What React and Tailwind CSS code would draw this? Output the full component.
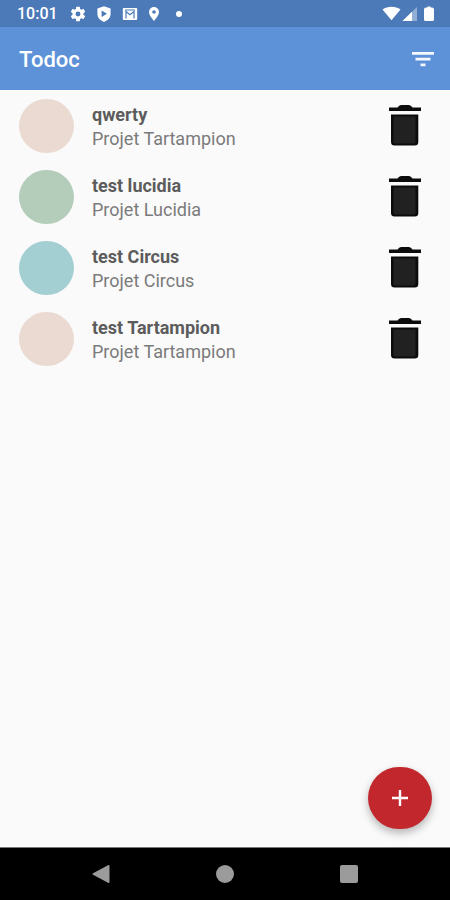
import React from "react";

const tasks = [
  { name: "qwerty", project: "Projet Tartampion", color: "bg-[#eadad1]" },
  { name: "test lucidia", project: "Projet Lucidia", color: "bg-[#b4cdba]" },
  { name: "test Circus", project: "Projet Circus", color: "bg-[#a3ced2]" },
  { name: "test Tartampion", project: "Projet Tartampion", color: "bg-[#eadad1]" },
];

function GearIcon() {
  return (
    <svg viewBox="1.5 1.5 21 21" className="size-4" fill="currentColor" aria-hidden="true">
      <path d="M19.14 12.94c.04-.3.06-.61.06-.94 0-.32-.02-.64-.07-.94l2.03-1.58a.49.49 0 0 0 .12-.61l-1.92-3.32a.488.488 0 0 0-.59-.22l-2.39.96c-.5-.38-1.03-.7-1.62-.94l-.36-2.54a.484.484 0 0 0-.48-.41h-3.84c-.24 0-.43.17-.47.41l-.36 2.54c-.59.24-1.13.57-1.62.94l-2.39-.96c-.22-.08-.47 0-.59.22L2.74 8.87c-.12.21-.08.47.12.61l2.03 1.58c-.05.3-.09.63-.09.94s.02.64.07.94l-2.03 1.58a.49.49 0 0 0-.12.61l1.92 3.32c.12.22.37.29.59.22l2.39-.96c.5.38 1.03.7 1.62.94l.36 2.54c.05.24.24.41.48.41h3.84c.24 0 .44-.17.47-.41l.36-2.54c.59-.24 1.13-.56 1.62-.94l2.39.96c.22.08.47 0 .59-.22l1.92-3.32c.12-.22.07-.47-.12-.61l-2.01-1.58zM12 15.2A3.2 3.2 0 1 1 12 8.8a3.2 3.2 0 0 1 0 6.4z" />
    </svg>
  );
}

function ShieldIcon() {
  return (
    <svg viewBox="0 0 16 16" className="size-4" fill="currentColor" aria-hidden="true">
      <path fillRule="evenodd" d="M8 0.300 14.600 2.600V8c0 3.600-2.600 6.500-6.600 8C4 14.500 1.400 11.600 1.400 8V2.600zM5.600 4.600v6.400L11 7.800z" />
    </svg>
  );
}

function MailIcon() {
  return (
    <svg viewBox="0 0 16 14" className="h-[14px] w-4" aria-hidden="true">
      <rect x="0.800" y="1" width="14.400" height="12" rx="1" fill="#fff" />
      <path d="M4 11.500V4.500L8 7.800 12 4.500V11.500M3 3H13" fill="none" stroke="#4c79b8" strokeWidth="1.200" />
    </svg>
  );
}

function PinIcon() {
  return (
    <svg viewBox="0 0 12 16" className="h-4 w-3" fill="currentColor" aria-hidden="true">
      <path fillRule="evenodd" d="M6 1a5 5 0 0 0-5 5c0 3.500 5 9 5 9s5-5.500 5-9a5 5 0 0 0-5-5zm0 3.200a1.800 1.800 0 1 1 0 3.600 1.800 1.800 0 0 1 0-3.600z" />
    </svg>
  );
}

function StatusIcons() {
  return (
    <svg viewBox="0 0 54 16" className="h-4 w-[54px]" fill="#fff" role="img" aria-label="Wi-Fi, signal, batterie">
      <path d="M0.500 3.400C5.500-0.200 13.500-0.200 18.500 3.400L9.500 14.200z" />
      <path d="M35 1V15H20.500z" opacity=".4" />
      <path d="M30 5.800V15H20.500z" />
      <path d="M45.500 0.500h3v1h1.500a2 2 0 0 1 2 2v10a1.500 1.500 0 0 1-1.500 1.500h-7a1.500 1.500 0 0 1-1.500-1.500v-10a2 2 0 0 1 2-2h1.500z" />
    </svg>
  );
}

function TrashIcon() {
  return (
    <svg viewBox="0 0 32 41" className="h-[41px] w-8" aria-hidden="true">
      <path d="M0 2.500H8.500Q10 0 12 0H20Q22 0 23.500 2.500H32V6H0z" fill="#0c0c0c" />
      <path d="M2 9.500H29.300V37a3.500 3.500 0 0 1-3.500 3.500H5.500A3.500 3.500 0 0 1 2 37z" fill="#0c0c0c" />
      <path d="M4.500 11.500H26.500V36.500a2 2 0 0 1-2 2H6.500a2 2 0 0 1-2-2z" fill="#212121" />
    </svg>
  );
}

export default function App() {
  return (
    <div className="flex min-h-screen flex-col bg-[#fafafa] font-['Roboto',sans-serif]">
      <div className="flex h-[27px] items-center bg-[#4c79b7] pr-[14px] pl-[17px] text-white">
        <span className="text-base font-medium">10:01</span>
        <div className="ml-3 flex flex-1 items-center gap-[10px]">
          <GearIcon />
          <ShieldIcon />
          <MailIcon />
          <PinIcon />
          <span className="ml-[6px] size-[6px] rounded-full bg-white" />
        </div>
        <StatusIcons />
      </div>

      <header className="flex h-[63px] items-center justify-between bg-[#5d91d8] pt-[2px] pr-4 pl-[19px] text-white">
        <h1 className="text-[22px] leading-7 font-medium">Todoc</h1>
        <button type="button" aria-label="Filtrer" className="cursor-pointer">
          <svg viewBox="0 0 22 16" className="h-4 w-[22px]" fill="#f4f8ff" aria-hidden="true">
            <path d="M0 0H22V2.800H0zM3.500 5.700H18.500V8.500H3.500zM8.500 11.400H13.500V14.200H8.500z" />
          </svg>
        </button>
      </header>

      <main className="relative flex-1">
        <ul>
          {tasks.map((task, i) => (
            <li key={i} className="flex h-[71px] items-center pr-[29px] pl-[19px]">
              <span className={`h-[54px] w-[55px] rounded-full ${task.color}`} />
              <div className="ml-[18px] flex-1 pt-[2px] text-lg leading-6">
                <p className="font-bold text-[#5c5c5c]">{task.name}</p>
                <p className="text-[#7b7b7b]">{task.project}</p>
              </div>
              <button type="button" aria-label={`Supprimer ${task.name}`} className="cursor-pointer">
                <TrashIcon />
              </button>
            </li>
          ))}
        </ul>
        <button
          type="button"
          aria-label="Ajouter une tâche"
          className="absolute right-[18px] bottom-[18px] flex h-[62px] w-16 cursor-pointer items-center justify-center rounded-full bg-[#c1272d] text-white shadow-[0_4px_8px_rgba(0,0,0,0.28)]"
        >
          <svg viewBox="0 0 18 18" className="size-[18px]" aria-hidden="true">
            <path d="M9 1V17M1 9H17" stroke="#fff" strokeWidth="2.400" />
          </svg>
        </button>
      </main>

      <nav className="flex h-[53px] items-center justify-center gap-[106px] border-t border-[#777] bg-black">
        <button type="button" aria-label="Retour" className="cursor-pointer">
          <svg viewBox="0 0 18 18" className="size-[18px]" fill="#9b9b9b" aria-hidden="true">
            <path d="M16 0.300Q17.500-0.300 17.500 1V17Q17.500 18.300 16 17.700L1 9.800Q0 9 1 8.200z" />
          </svg>
        </button>
        <button type="button" aria-label="Accueil" className="size-[18px] cursor-pointer rounded-full bg-[#9b9b9b]" />
        <button type="button" aria-label="Applications récentes" className="size-[18px] cursor-pointer rounded-xs bg-[#9b9b9b]" />
      </nav>
    </div>
  );
}
